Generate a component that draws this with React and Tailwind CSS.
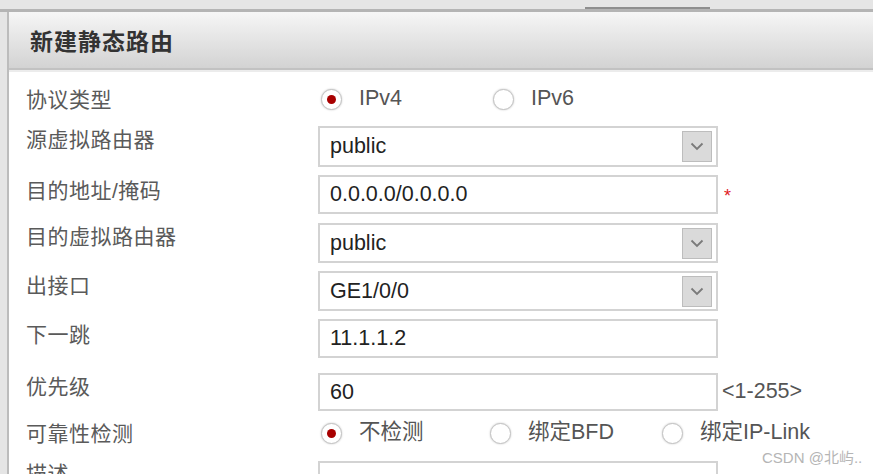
const LABEL = 'w-[292px] shrink-0 text-[21px] leading-none tracking-[0.5px] text-[#5a5a5a]'
const BOX = 'w-[400px] shrink-0 bg-white border-2 border-[#d3d3d3] flex items-center pl-[10px] text-[21.5px] text-[#222]'

function Radio({ checked, label, width }) {
  return (
    <div className="flex items-center shrink-0" style={width ? { width } : undefined}>
      <span className="w-[21px] h-[21px] rounded-full border border-[#c4c4c4] bg-white shadow-[0_0_2px_rgba(0,0,0,0.25)] flex items-center justify-center">
        {checked && <span className="w-[9px] h-[9px] rounded-full bg-[#a80000]" />}
      </span>
      <span className="ml-[17px] text-[21.5px] leading-none text-[#555]">{label}</span>
    </div>
  )
}

function Select({ value, h }) {
  return (
    <div className={`${BOX} justify-between pr-[4px]`} style={{ height: h }}>
      <span>{value}</span>
      <span className="w-[30px] h-[31px] bg-[#dadada] border border-[#bdbdbd] flex items-center justify-center">
        <svg width="14" height="9" viewBox="0 0 14 9">
          <path d="M1.5 1.5 L7 7 L12.5 1.5" fill="none" stroke="#7a7a7a" strokeWidth="1.8" />
        </svg>
      </span>
    </div>
  )
}

function Input({ value, h }) {
  return (
    <div className={BOX} style={{ height: h }}>
      <span>{value}</span>
    </div>
  )
}

export default function App() {
  return (
    <div
      className="w-[873px] h-[474px] overflow-hidden bg-[#e5e5e5] relative"
      style={{ fontFamily: '"Liberation Sans", Arial, "Noto Sans CJK SC", sans-serif' }}
    >
      {/* top strip */}
      <div className="h-[9px] relative">
        <div className="absolute left-[585px] top-[7px] w-[125px] h-[2px] bg-[#8e8e8e]" />
      </div>
      <div className="h-[3px] bg-[#b4b4b4]" />

      <div className="pl-[7px]">
        <div className="border-l-2 border-[#bcbcbc]">
          {/* header */}
          <div className="h-[56px] bg-gradient-to-b from-[#f6f6f6] to-[#d3d3d3] flex items-center pl-[21px]">
            <h1 className="text-[23px] font-bold tracking-[1px] text-[#333] leading-none" style={{ fontFamily: '"Noto Sans CJK SC", sans-serif' }}>
              新建静态路由
            </h1>
          </div>
          <div className="h-[2px] bg-[#c2c2c2]" />
          <div className="h-[2px] bg-[#ececec]" />

          {/* body */}
          <div className="bg-white h-[420px] pl-[17px] pt-[13px]">
            <div className="flex items-center h-[28px]">
              <span className={LABEL}>协议类型</span>
              <div className="flex items-center pl-[3px]">
                <Radio checked label="IPv4" width={172} />
                <Radio label="IPv6" />
              </div>
            </div>

            <div className="flex items-center mt-[13px]">
              <span className={`${LABEL} mb-[15px]`}>源虚拟路由器</span>
              <Select value="public" h={41} />
            </div>

            <div className="flex items-center mt-[8px]">
              <span className={`${LABEL} mb-[9px]`}>目的地址/掩码</span>
              <Input value="0.0.0.0/0.0.0.0" h={39} />
              <span className="ml-[6px] mt-[2px] text-[18px] leading-none text-[#e0201f]">*</span>
            </div>

            <div className="flex items-center mt-[9px]">
              <span className={`${LABEL} mb-[13px]`}>目的虚拟路由器</span>
              <Select value="public" h={40} />
            </div>

            <div className="flex items-center mt-[8px]">
              <span className={`${LABEL} mb-[12px]`}>出接口</span>
              <Select value="GE1/0/0" h={40} />
            </div>

            <div className="flex items-center mt-[8px]">
              <span className={`${LABEL} mb-[9px]`}>下一跳</span>
              <Input value="11.1.1.2" h={39} />
            </div>

            <div className="flex items-center mt-[15px]">
              <span className={`${LABEL} mb-[12px]`}>优先级</span>
              <Input value="60" h={38} />
              <span className="ml-[4px] text-[21.5px] leading-none text-[#555]">&lt;1-255&gt;</span>
            </div>

            <div className="flex items-center h-[28px] mt-[8px]">
              <span className={LABEL}>可靠性检测</span>
              <div className="flex items-center pl-[3px]">
                <Radio checked label="不检测" width={169} />
                <Radio label="绑定BFD" width={172} />
                <Radio label="绑定IP-Link" />
              </div>
            </div>

            <div className="flex items-start mt-[14px]">
              <span className={`${LABEL} pt-[2px]`}>描述</span>
              <Input value="" h={39} />
            </div>
          </div>
        </div>
      </div>

      <span className="absolute left-[762px] top-[450px] text-[15px] text-[#b5b5b5] leading-none">
        CSDN @北屿..
      </span>
    </div>
  )
}
